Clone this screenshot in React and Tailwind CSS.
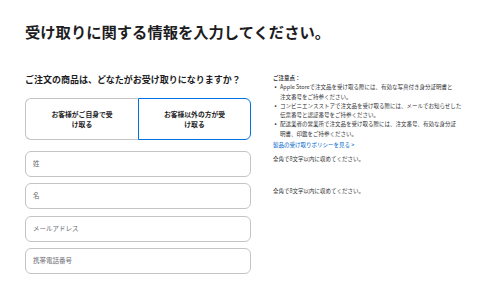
import React from 'react';

const notes = [
  ['Apple Storeで注文品を受け取る際には、有効な写真付き身分証明書と', '注文番号をご持参ください。'],
  ['コンビニエンスストアで注文品を受け取る際には、メールでお知らせした', '伝票番号と認証番号をご持参ください。'],
  ['配送業者の営業所で注文品を受け取る際には、注文番号、有効な身分証', '明書、印鑑をご持参ください。'],
];

const fields = ['姓', '名', 'メールアドレス', '携帯電話番号'];

const App = () => {
  return (
    <div className="w-[500px] h-[290px] overflow-hidden bg-white pl-[25px] pt-[21px] text-[#1d1d1f] font-['Noto_Sans_CJK_JP','Noto_Sans',sans-serif]">
      <h1 className="text-[15.3px] leading-[20px] font-bold">
        受け取りに関する情報を入力してください。
      </h1>

      <div className="flex gap-[22px] mt-[33px]">
        {/* left: who picks up */}
        <div className="w-[226px]">
          <h2 className="text-[9px] leading-[12px] font-bold">
            ご注文の商品は、どなたがお受け取りになりますか？
          </h2>

          <div className="grid grid-cols-2 h-[42px] mt-[12px]">
            <button className="flex items-center justify-center rounded-l-[6px] border border-r-0 border-[#c4c4c4] bg-white">
              <span className="w-[64px] text-center text-[6.8px] leading-[10px] font-bold">
                お客様がご自身で受け取る
              </span>
            </button>
            <button className="flex items-center justify-center rounded-r-[6px] border border-[#0071e3] bg-white">
              <span className="w-[64px] text-center text-[6.8px] leading-[10px] font-bold">
                お客様以外の方が受け取る
              </span>
            </button>
          </div>

          <div className="flex flex-col gap-[6.3px] mt-[11px]">
            {fields.map((f) => (
              <div
                key={f}
                className="h-[26px] flex items-center rounded-[6px] border border-[#c4c4c4] pl-[7px] text-[6.5px] text-[#6e6e73]"
              >
                {f}
              </div>
            ))}
          </div>
        </div>

        {/* right: notes */}
        <div className="w-[205px] text-[5.5px] leading-[9.3px] text-[#333336]">
          <p className="font-bold">ご注意点：</p>
          <ul>
            {notes.map(([a, b]) => (
              <li key={a} className="flex">
                <span className="w-[7px] pl-[1.5px] font-bold">•</span>
                <span>
                  {a}
                  <br />
                  {b}
                </span>
              </li>
            ))}
          </ul>
          <a className="block mt-[1.5px] text-[#0066cc]">製品の受け取りポリシーを見る &gt;</a>
          <p className="mt-[5px]">全角で8文字以内に収めてください。</p>
          <p className="mt-[23px]">全角で8文字以内に収めてください。</p>
        </div>
      </div>
    </div>
  );
};

export default App;
